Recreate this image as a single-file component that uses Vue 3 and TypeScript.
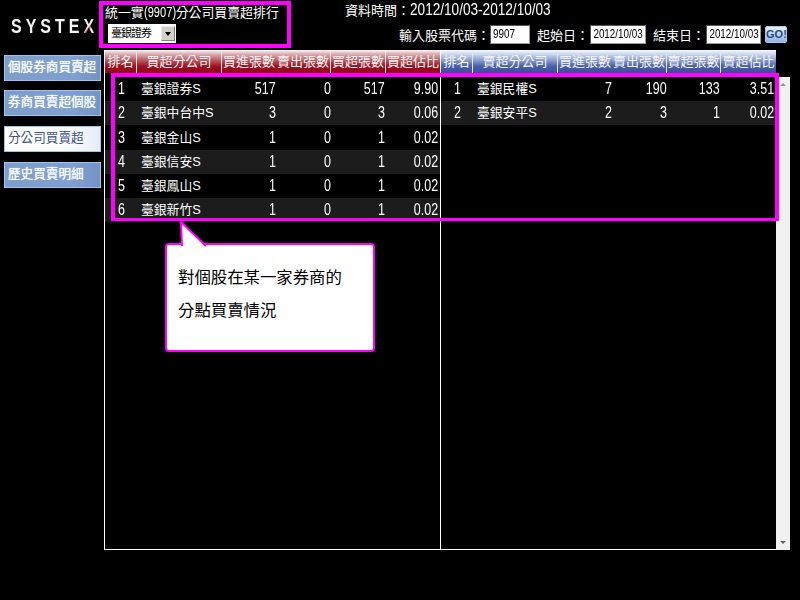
<script setup lang="ts">
interface Row {
  rank: number
  name: string
  buy: number
  sell: number
  net: number
  ratio: string
}

const navItems = ['個股券商買賣超', '券商買賣超個股', '分公司買賣超', '歷史買賣明細']
const activeNav = 2

const buyRows: Row[] = [
  { rank: 1, name: '臺銀證券S', buy: 517, sell: 0, net: 517, ratio: '9.90' },
  { rank: 2, name: '臺銀中台中S', buy: 3, sell: 0, net: 3, ratio: '0.06' },
  { rank: 3, name: '臺銀金山S', buy: 1, sell: 0, net: 1, ratio: '0.02' },
  { rank: 4, name: '臺銀信安S', buy: 1, sell: 0, net: 1, ratio: '0.02' },
  { rank: 5, name: '臺銀鳳山S', buy: 1, sell: 0, net: 1, ratio: '0.02' },
  { rank: 6, name: '臺銀新竹S', buy: 1, sell: 0, net: 1, ratio: '0.02' }
]

const sellRows: Row[] = [
  { rank: 1, name: '臺銀民權S', buy: 7, sell: 190, net: 133, ratio: '3.51' },
  { rank: 2, name: '臺銀安平S', buy: 2, sell: 3, net: 1, ratio: '0.02' }
]

const panels = [
  {
    tone: 'red',
    heads: ['排名', '買超分公司', '買進張數', '賣出張數', '買超張數', '買超佔比'],
    rows: buyRows
  },
  {
    tone: 'blue',
    heads: ['排名', '賣超分公司', '買進張數', '賣出張數', '賣超張數', '賣超佔比'],
    rows: sellRows
  }
]
</script>

<template>
  <div class="page">
    <aside class="side">
      <div class="logo"><span class="logo-text">SYSTE<span class="logo-x">X</span></span></div>
      <nav class="nav">
        <div
          v-for="(item, i) in navItems"
          :key="item"
          class="nav-btn"
          :class="{ active: i === activeNav }"
        >
          {{ item }}
        </div>
      </nav>
    </aside>

    <main class="main">
      <header class="top">
        <div class="title-box">
          <div class="title">統一實<span class="title-code">(9907)</span>分公司買賣超排行</div>
          <div class="select">
            <span class="select-text">臺銀證券</span>
            <span class="select-arrow"><i></i></span>
          </div>
        </div>
        <div class="query">
          <div class="date-range">資料時間：<span class="date-text">2012/10/03-2012/10/03</span></div>
          <div class="form">
            <label>輸入股票代碼：</label>
            <span class="field code"><span>9907</span></span>
            <label>起始日：</label>
            <span class="field"><span>2012/10/03</span></span>
            <label>結束日：</label>
            <span class="field end"><span>2012/10/03</span></span>
            <span class="go">GO!</span>
          </div>
        </div>
      </header>

      <section class="board">
        <div class="tables">
          <div v-for="panel in panels" :key="panel.tone" class="panel">
            <div class="head" :class="panel.tone">
              <span
                v-for="(h, i) in panel.heads"
                :key="h"
                class="hcell"
                :class="{ nosep: i === 2 }"
              >{{ h }}</span>
            </div>
            <div class="body">
              <div v-for="row in panel.rows" :key="row.rank" class="row">
                <span class="rank"><b>{{ row.rank }}</b></span>
                <span class="name">{{ row.name }}</span>
                <span class="num"><b>{{ row.buy }}</b></span>
                <span class="num"><b>{{ row.sell }}</b></span>
                <span class="num"><b>{{ row.net }}</b></span>
                <span class="num"><b>{{ row.ratio }}</b></span>
              </div>
            </div>
          </div>
        </div>
        <div class="scrollbar">
          <span class="arrow up"></span>
          <span class="arrow down"></span>
        </div>
      </section>
    </main>

    <div class="highlight"></div>
    <div class="callout">
      <svg class="tail" width="30" height="26" viewBox="0 0 30 26">
        <path d="M3 25 L2 1 L27 25" fill="#fff" stroke="#f0f" stroke-width="2" />
      </svg>
      <p>對個股在某一家券商的</p>
      <p>分點買賣情況</p>
    </div>
  </div>
</template>

<style scoped>
.page {
  position: relative;
  display: flex;
  width: 800px;
  height: 600px;
  overflow: hidden;
  background: #000;
  color: #fff;
  font-family: "Liberation Sans", "Noto Sans CJK TC", sans-serif;
  font-size: 13px;
}

.side {
  width: 104px;
  flex: none;
}

.logo {
  height: 54.6px;
  padding: 14px 0 0 11px;
  box-sizing: border-box;
  font-size: 20px;
  font-weight: 700;
  line-height: 24px;
  color: #f2f2f2;
  white-space: nowrap;
}

.logo-text {
  display: inline-block;
  letter-spacing: 5px;
  transform: scaleX(0.8);
  transform-origin: left center;
}

.logo-x {
  background: linear-gradient(135deg, #eee 44%, #d22 50%, #eee 56%);
  -webkit-background-clip: text;
  background-clip: text;
  color: transparent;
}

.nav {
  display: flex;
  flex-direction: column;
  gap: 9.7px;
  padding-left: 4px;
}

.nav-btn {
  width: 97px;
  height: 26px;
  box-sizing: border-box;
  padding-left: 3px;
  border: 1px solid #9cc2f6;
  background: linear-gradient(90deg, #7d9dcb 0%, #7fa0d0 70%, #7393c4 100%);
  font-size: 12.6px;
  line-height: 23px;
  color: #f8fbff;
  text-shadow: 0 0 1px #fff;
  white-space: nowrap;
}

.nav-btn.active {
  background: linear-gradient(90deg, #fff 0%, #fff 60%, #e6ecf7 100%);
  color: #3c4f8f;
  text-shadow: none;
}

.main {
  flex: 1;
  min-width: 0;
  display: flex;
  flex-direction: column;
}

.top {
  display: flex;
  height: 50px;
  flex: none;
}

.title-box {
  width: 192px;
  height: 47px;
  flex: none;
  box-sizing: border-box;
  margin: 1px 0 0 -5px;
  padding-left: 2px;
  border: 4px solid #f0f;
}

.title {
  height: 18px;
  margin-top: -2px;
  font-size: 12.9px;
  line-height: 18px;
  white-space: nowrap;
}

.title-code {
  display: inline-block;
  width: 32px;
  font-size: 15px;
  transform: scaleX(0.74);
  transform-origin: left center;
}

.select {
  display: flex;
  width: 68px;
  height: 19px;
  margin: 3px 0 0 3px;
  background: #fff;
  color: #000;
}

.select-text {
  flex: 1;
  padding-left: 3px;
  font-size: 11px;
  line-height: 19px;
  letter-spacing: -1px;
  white-space: nowrap;
}

.select-arrow {
  display: flex;
  align-items: center;
  justify-content: center;
  width: 14px;
  height: 15px;
  margin: 2px 1px 0 0;
  box-sizing: border-box;
  border: 1px solid #808080;
  border-top-color: #e8e8e8;
  border-left-color: #e8e8e8;
  background: #d4d0c8;
}

.select-arrow i {
  width: 0;
  height: 0;
  border: 3.5px solid transparent;
  border-top: 4px solid #000;
  border-bottom: 0;
}

.query {
  flex: 1;
  min-width: 0;
}

.date-range {
  height: 18px;
  margin: 1px 0 0 54px;
  font-size: 13px;
  line-height: 18px;
  white-space: nowrap;
}

.date-text {
  display: inline-block;
  font-size: 16px;
  transform: scaleX(0.85);
  transform-origin: left center;
}

.form {
  display: flex;
  align-items: center;
  height: 19px;
  margin: 6px 0 0 108px;
  white-space: nowrap;
}

.form label {
  font-size: 13px;
  margin-right: 1px;
}

.form label:first-child {
  margin-right: 0;
}

.field {
  display: flex;
  justify-content: center;
  width: 56px;
  height: 19px;
  margin-right: 7px;
  box-sizing: border-box;
  border: 1px solid #999;
  border-top-color: #555;
  border-left-color: #555;
  background: #fff;
  color: #000;
  font-size: 12px;
  line-height: 17px;
}

.field span {
  flex: none;
  transform: scaleX(0.82);
}

.field.code {
  width: 40px;
  justify-content: flex-start;
  padding-left: 2px;
}

.field.code span {
  transform-origin: left center;
}

.field.end {
  width: 55px;
  margin-right: 4px;
}

.go {
  width: 22px;
  height: 17px;
  box-sizing: border-box;
  border: 1px solid #a9c8f0;
  border-radius: 2px;
  background: linear-gradient(#eaf2fd, #8fb3e6);
  color: #2c4a8c;
  font-size: 11px;
  font-weight: 700;
  line-height: 15px;
  text-align: center;
}

.board {
  display: flex;
  flex: none;
  width: 686px;
  height: 500px;
}

.tables {
  display: flex;
  width: 672px;
  height: 500px;
  box-sizing: border-box;
  border-bottom: 1px solid #fff;
  border-left: 1px solid #fff;
}

.panel {
  display: flex;
  flex-direction: column;
}

.panel:first-child {
  width: 336px;
  border-right: 1px solid #fff;
  box-sizing: border-box;
}

.panel:last-child {
  width: 335px;
}

.head,
.row {
  display: grid;
  grid-template-columns: 32px 85px 54px 55px 55px 54px;
}

.panel:last-child .head,
.panel:last-child .row {
  grid-template-columns: 32px 85px 54px 55px 54px 55px;
}

.head {
  height: 23px;
  flex: none;
  margin-bottom: 4px;
  background: linear-gradient(#f8f8f8 0, #e0b8bc 15%, #c06870 40%, #a01020 70%, #900014 100%);
}

.head.blue {
  background: linear-gradient(#f5f8fd 0, #c8d4ec 20%, #8a9cd0 45%, #4a5fa8 70%, #3a4d9a 100%);
}

.hcell {
  border-right: 1px solid #e8e8e8;
  font-size: 13px;
  line-height: 24px;
  text-align: center;
  white-space: nowrap;
  color: #f6f6f6;
}

.hcell.nosep,
.hcell:last-child {
  border-right: 0;
}

.body {
  flex: 1;
  min-height: 0;
}

.row {
  height: 24px;
  margin-bottom: 0.3px;
  font-size: 16px;
  line-height: 24px;
}

.row:nth-child(even) {
  background: #1c1c1c;
}

.row b {
  display: inline-block;
  font-weight: 400;
  transform: scaleX(0.78);
}

.rank {
  text-align: center;
}

.name {
  padding-left: 4px;
  font-size: 12.8px;
  white-space: nowrap;
}

.num {
  text-align: right;
}

.num:nth-child(5) {
  padding-right: 1px;
}

.num:last-child {
  padding-right: 2px;
}

.num b {
  transform-origin: right center;
}

.scrollbar {
  position: relative;
  width: 14px;
  height: 473px;
  margin-top: 27px;
  background: #f1f1f1;
}

.arrow {
  position: absolute;
  left: 4px;
  width: 0;
  height: 0;
  border: 3px solid transparent;
}

.arrow.up {
  top: 6px;
  border-top: 0;
  border-bottom: 3px solid #999;
}

.arrow.down {
  bottom: 6px;
  border-bottom: 0;
  border-top: 3px solid #666;
}

/* overlays drawn on top of the screenshot */
.highlight {
  position: absolute;
  left: 111px;
  top: 73px;
  width: 668px;
  height: 148px;
  box-sizing: border-box;
  border: 4px solid #f0f;
  border-bottom-width: 3px;
}

.callout {
  position: absolute;
  left: 165px;
  top: 243px;
  width: 210px;
  height: 109px;
  box-sizing: border-box;
  padding: 15px 0 0 11px;
  border: 2px solid #f0f;
  border-radius: 4px;
  background: #fff;
  color: #000;
  font-family: "Noto Sans CJK TC", sans-serif;
  font-size: 16.4px;
  line-height: 33px;
}

.callout p {
  margin: 0;
  white-space: nowrap;
}

.tail {
  position: absolute;
  left: 12px;
  top: -24px;
  overflow: visible;
}
</style>
